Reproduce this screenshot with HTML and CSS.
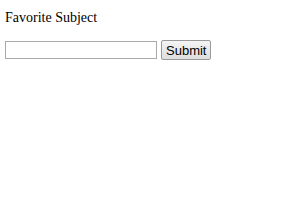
FILE: index.html
```html
<!DOCTYPE html>
<html>
<head>
  <title>Favorite Subject</title>
  <link rel="stylesheet" href="styles.css">
</head>
<body>
  <form class="subject-form">
    <div class="label">Favorite Subject</div>
    <div class="row">
      <input type="text" class="subject-input">
      <button type="submit" class="submit-btn">Submit</button>
    </div>
  </form>
</body>
</html>
```

FILE: styles.css
```css
body {
  margin: 9px 5px;
  font-family: "Liberation Serif", serif;
  font-size: 14px;
  color: #000;
  background: #fff;
}

.label {
  line-height: 18px;
  margin-bottom: 13px;
}

.row {
  display: flex;
  align-items: center;
  gap: 4px;
}

.subject-input {
  width: 146px;
  height: 14px;
  border: 1px solid #a9a9a9;
  padding: 1px 2px;
  margin: 0;
}

.submit-btn {
  font-family: "Liberation Sans", Arial, sans-serif;
  font-size: 13px;
  height: 20px;
  padding: 0 4px;
  margin: 0;
  border: 1px solid #9a9a9a;
  border-radius: 2px;
  background: linear-gradient(#f4f4f4, #dedede);
  color: #000;
}
```
